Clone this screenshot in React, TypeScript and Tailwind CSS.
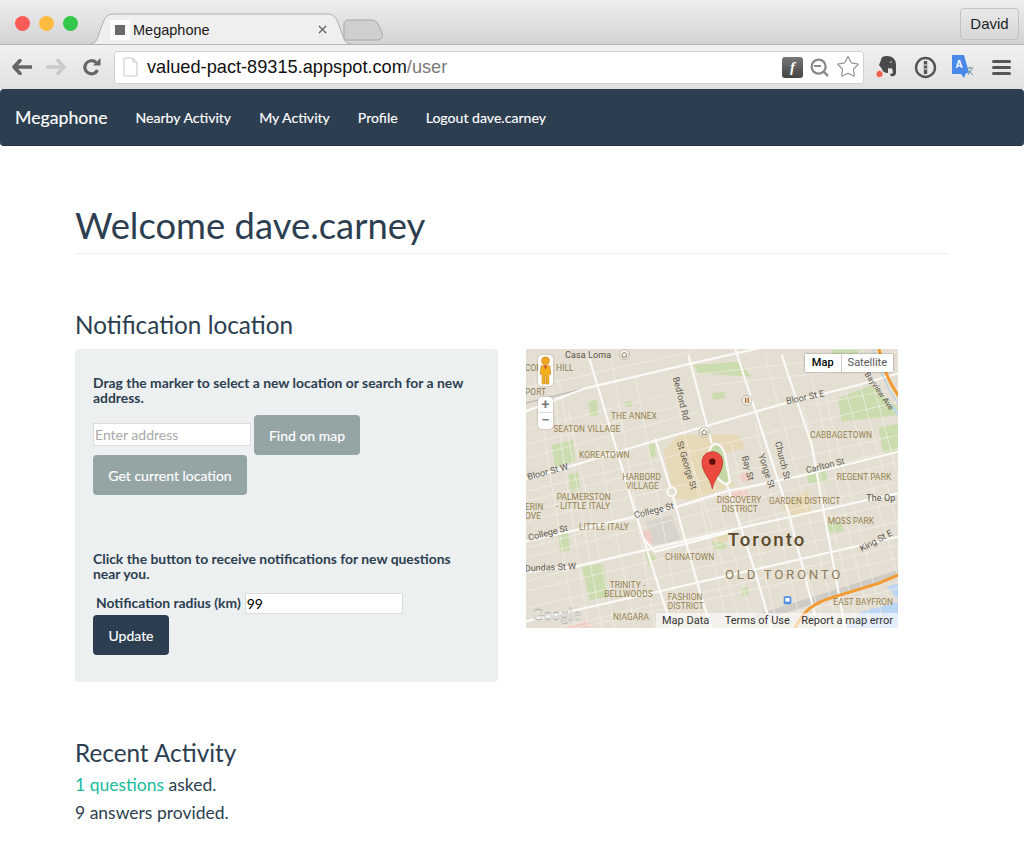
import { Search, Star, X } from 'lucide-react';

const minorRoads = [
  'M70 30 L190 849', 'M130 200 L270 849', 'M260 40 L390 849', 'M330 90 L470 849', 'M440 90 L610 849',
  'M560 400 L690 849', 'M690 230 L830 849', 'M720 30 L940 849', 'M830 170 L1000 849', 'M900 150 L1080 849',
  'M960 130 L1120 700', 'M1040 100 L1120 400', 'M0 255 L420 150', 'M0 340 L520 200', 'M0 470 L400 370',
  'M0 530 L1120 270', 'M0 640 L1120 350', 'M0 740 L1120 470', 'M0 790 L1120 530', 'M150 849 L1120 640',
  'M0 130 L500 20', 'M500 90 L1120 20', 'M860 180 L1120 130', 'M610 849 L1120 730',
  'M30 100 L150 849', 'M100 100 L230 849', 'M220 300 L330 849', 'M500 350 L650 849', 'M620 300 L760 849',
  'M780 500 L900 849', 'M860 100 L1040 849', 'M1000 100 L1120 550', 'M0 300 L470 180', 'M0 440 L1120 170',
  'M0 500 L350 420', 'M0 610 L1120 310', 'M0 710 L1120 410', 'M100 849 L1120 600', 'M560 120 L1120 60',
];

const mainRoads = [
  'M0 405 L380 290 L780 175 L1000 120 L1120 85',
  'M0 590 L440 490 L600 440 L840 390 L1120 320',
  'M0 682 L150 665 L640 550 L1120 445',
  'M0 830 L420 735 L1120 575',
  'M0 200 L180 130 L500 55 L700 10',
  'M190 30 L330 500 L440 849',
  'M390 280 L440 440 L530 760 L560 849',
  'M490 30 L560 295',
  'M600 400 L690 680 L740 849',
  'M630 10 L790 500 L880 849',
  'M770 30 L860 300 L960 849',
  'M355 580 L390 620 L620 560',
];

const parks = [
  'M80 300 L145 285 L150 350 L90 365 Z', 'M130 390 L160 380 L165 435 L135 440 Z', 'M190 170 L215 165 L220 210 L195 212 Z',
  'M505 60 L640 50 L680 95 L520 85 Z', 'M940 160 L1040 120 L1120 190 L1120 210 L950 230 Z', 'M1060 250 L1120 235 L1120 320 L1075 325 Z',
  'M170 665 L235 655 L250 755 L195 765 Z', 'M100 570 L130 565 L135 615 L105 620 Z', 'M360 610 L395 640 L370 665 Z',
  'M845 385 L900 370 L910 410 L850 415 Z', 'M560 590 L600 580 L605 610 L570 615 Z', 'M905 540 L950 530 L955 560 L910 565 Z',
  'M560 145 L600 140 L600 160 L565 165 Z', 'M300 170 L320 168 L320 185 L300 186 Z', 'M650 730 L670 725 L670 750 L652 752 Z',
  'M370 300 L390 295 L392 335 L375 335 Z', 'M920 15 L1000 15 L990 80 L930 70 Z',
];

const campus = [
  'M415 320 L460 270 L640 270 L660 310 L540 340 L630 420 L500 465 L450 460 Z',
  'M770 480 L850 435 L860 510 L790 515 Z', 'M560 570 L610 565 L610 590 L565 595 Z',
];

const labels: [number, number, string, string, number][] = [
  [120, 38, 'Casa Loma', '#5b5145', 27],
  [0, 78, 'COMBE HILL', '#8d7c5c', 25],
  [0, 150, 'PORT', '#8d7c5c', 25],
  [258, 222, 'THE ANNEX', '#94814f', 25],
  [85, 262, 'SEATON VILLAGE', '#94814f', 25],
  [162, 340, 'KOREATOWN', '#94814f', 25],
  [292, 405, 'HARBORD', '#94814f', 25],
  [302, 433, 'VILLAGE', '#94814f', 25],
  [95, 465, 'PALMERSTON', '#94814f', 25],
  [92, 493, '- LITTLE ITALY', '#94814f', 25],
  [162, 555, 'LITTLE ITALY', '#94814f', 25],
  [0, 495, 'ERIN', '#94814f', 25],
  [0, 523, 'OVE', '#94814f', 25],
  [420, 646, 'CHINATOWN', '#94814f', 25],
  [254, 728, 'TRINITY -', '#94814f', 25],
  [238, 756, 'BELLWOODS', '#94814f', 25],
  [428, 765, 'FASHION', '#94814f', 25],
  [428, 793, 'DISTRICT', '#94814f', 25],
  [264, 825, 'NIAGARA', '#94814f', 25],
  [575, 473, 'DISCOVERY', '#94814f', 25],
  [590, 501, 'DISTRICT', '#94814f', 25],
  [732, 476, 'GARDEN DISTRICT', '#94814f', 25],
  [855, 278, 'CABBAGETOWN', '#94814f', 25],
  [935, 404, 'REGENT PARK', '#94814f', 25],
  [908, 538, 'MOSS PARK', '#94814f', 25],
  [925, 780, 'EAST BAYFRON', '#94814f', 25],
  [1024, 467, 'The Op', '#57534a', 27],
];

const streets: [number, number, number, string, number][] = [
  [10, 405, -15, 'Bloor St W', 27],
  [785, 178, -12, 'Bloor St E', 27],
  [330, 520, -14, 'College St', 27],
  [12, 587, -14, 'College St', 27],
  [0, 680, -3, 'Dundas St W', 27],
  [845, 385, -14, 'Carlton St', 27],
  [1010, 620, -28, 'King St E', 27],
  [443, 98, 76, 'Bedford Rd', 27],
  [455, 292, 73, 'St George St', 27],
  [650, 335, 75, 'Bay St', 27],
  [700, 330, 72, 'Yonge St', 27],
  [750, 292, 76, 'Church St', 27],
  [1018, 88, 55, 'Bayview Ave', 24],
];

function MapPanel() {
  return (
    <div className="relative h-[279px] w-[372px] shrink-0 overflow-hidden font-['Roboto',sans-serif]">
      <svg viewBox="3 12 1116 837" className="block h-full w-full">
        <rect x="0" y="0" width="1125" height="855" fill="#e5dfd3" />
        {parks.map((d) => <path key={d} d={d} fill="#cbdcae" />)}
        {campus.map((d) => <path key={d} d={d} fill="#e6d9b8" />)}
        <path d="M360 530 L440 510 L470 590 L385 600 Z" fill="#d9d4cb" />
        <path d="M350 560 L375 555 L385 595 L360 600 Z" fill="#f0cdc6" />
        <path d="M610 440 L660 425 L670 450 L620 460 Z" fill="#f0cdc6" />
        <path d="M640 390 L670 380 L675 405 L650 410 Z" fill="#f0cdc6" />
        <path d="M110 849 L190 825 L200 849 Z" fill="#f0cdc6" />
        <path d="M690 810 L1120 675 L1120 695 L700 830 Z" fill="#cfccc6" />
        <path d="M960 849 L1010 800 L1120 770 L1120 849 Z" fill="#bcd5f3" />
        <path d="M1085 725 L1120 715 L1120 765 Z" fill="#bcd5f3" />
        <path d="M1085 165 L1120 200 L1120 215 Z" fill="#bcd5f3" />
        {minorRoads.map((d) => <path key={d} d={d} fill="none" stroke="#f3efe7" strokeOpacity="0.85" strokeWidth="2.5" />)}
        <path d="M0 175 L200 125 L500 55" fill="none" stroke="#bcb8b0" strokeWidth="4" />
        {mainRoads.map((d) => <path key={d} d={d} fill="none" stroke="#fbfaf7" strokeWidth="6.5" />)}
        <path d="M556 312 C565 285 590 295 600 330 L615 410 C600 430 580 400 570 390 M556 312 L535 360" fill="#c4d8a8" stroke="#fbfaf7" strokeWidth="7" />
        <circle cx="440" cy="440" r="13" fill="#e5dfd3" stroke="#fbfaf7" strokeWidth="6" />
        <path d="M810 849 C835 800 860 775 930 755 L1060 715 L1120 690" fill="none" stroke="#f39a30" strokeWidth="9" />
        <path d="M1062 12 C1075 70 1090 110 1122 155" fill="none" stroke="#f39a30" strokeWidth="9" />
        <path d="M1045 12 L1060 60 L1090 130 L1122 180" fill="none" stroke="#a9c9ed" strokeWidth="3" />
        {labels.map(([x, y, t, c, s]) => (
          <text key={t + x} x={x} y={y} fill={c} fontSize={s} letterSpacing="0.3">{t}</text>
        ))}
        {streets.map(([x, y, r, t, s]) => (
          <text key={t + x} x={x} y={y} transform={`rotate(${r} ${x} ${y})`} fill="#5f5a50" fontSize={s}>{t}</text>
        ))}
        <text x="608" y="604" fill="#5b4a2c" fontSize="56" fontWeight="500" letterSpacing="6">Toronto</text>
        <text x="600" y="702" fill="#8f7c5a" fontSize="40" letterSpacing="8">OLD TORONTO</text>
        <text x="20" y="825" fill="#fff" fillOpacity="0.75" stroke="#9a9a9a" strokeWidth="1" fontSize="50" fontFamily="'Liberation Serif', serif">Google</text>
        <circle cx="298" cy="28" r="15" fill="#f3efe8" stroke="#a9a08c" strokeWidth="2" />
        <path d="M289 30 L298 21 L307 30 M292 30 V36 H304 V30" fill="none" stroke="#8d7f64" strokeWidth="3" />
        <circle cx="538" cy="261" r="15" fill="#f3efe8" stroke="#a9a08c" strokeWidth="2" />
        <path d="M529 263 L538 254 L547 263 M532 263 V269 H544 V263" fill="none" stroke="#8d7f64" strokeWidth="3" />
        <circle cx="666" cy="166" r="15" fill="#f3efe8" stroke="#a9a08c" strokeWidth="2" />
        <rect x="660" y="158" width="4" height="16" fill="#a5672e" />
        <rect x="668" y="158" width="4" height="16" fill="#a5672e" />
        <rect x="776" y="754" width="23" height="24" rx="4" fill="#4d90e0" />
        <rect x="781" y="759" width="13" height="11" fill="#fff" />
        <path d="M562 432 C555 395 531 385 531 352 C531 332 545 320 562 320 C579 320 593 332 593 352 C593 385 569 395 562 432 Z" fill="#ea4a3f" stroke="#b52e28" strokeWidth="2" />
        <circle cx="562" cy="350" r="9.5" fill="#5e0f0a" />
      </svg>

      {/* pegman */}
      <div className="absolute left-[12px] top-[6px] flex h-[31px] w-[15px] items-start justify-center rounded-sm bg-white shadow-[0_0_2px_rgba(0,0,0,0.3)]">
        <svg viewBox="0 0 13 30" className="mt-[1px] h-[29px] w-[13px]">
          <circle cx="6.5" cy="5" r="4" fill="#f2a51f" stroke="#c57f12" strokeWidth="0.7" />
          <path d="M2 10 H11 L12 19 H10 V29 H7 V20 H6 V29 H3 V19 H1 Z" fill="#f2b01e" stroke="#c57f12" strokeWidth="0.6" />
          <path d="M5 10 H8 L6.5 14 Z" fill="#c0392b" />
        </svg>
      </div>

      {/* zoom */}
      <div className="absolute left-[12px] top-[48px] flex w-[15px] flex-col rounded-sm bg-white text-center text-[#777] shadow-[0_0_2px_rgba(0,0,0,0.3)]">
        <span className="h-[16px] border-b border-[#ddd] text-[15px] font-medium leading-[15px]">+</span>
        <span className="h-[16px] text-[15px] font-medium leading-[15px]">−</span>
      </div>

      {/* map type */}
      <div className="absolute right-[5px] top-[5px] flex h-[18px] items-center bg-white text-[11px] shadow-[0_0_2px_rgba(0,0,0,0.4)]">
        <span className="flex h-full items-center border-r border-[#ccc] px-[7px] font-medium text-black">Map</span>
        <span className="flex h-full items-center px-[6px] text-[#565656]">Satellite</span>
      </div>

      {/* attribution */}
      <div className="absolute bottom-0 right-0 flex h-[15px] w-[242px] items-center justify-between bg-white/60 pl-[6px] pr-[5px] text-[11px] leading-none text-[#333]">
        <span>Map Data</span>
        <span className="ml-[4px]">Terms of Use</span>
        <span>Report a map error</span>
      </div>
    </div>
  );
}

function BrowserChrome() {
  return (
    <div className="font-['Liberation_Sans',sans-serif]">
      <div className="relative flex h-[45px] items-start border-b border-[#b5b5b5] bg-gradient-to-b from-[#eeeeee] to-[#d3d3d3]">
        <div className="flex gap-[9px] pl-[15px] pt-[16px]">
          <span className="size-[15px] rounded-full bg-[#fc5b57]" />
          <span className="size-[15px] rounded-full bg-[#fdbb40]" />
          <span className="size-[15px] rounded-full bg-[#34c84a]" />
        </div>
        <svg className="absolute left-[90px] top-[13px]" width="300" height="33" viewBox="0 0 300 33">
          <path d="M254 27 L288 27 Q294 26 292 20 L288 11 Q286 7 282 7 L258 7 Q253 8 254 13 Z" fill="#cfcfcf" stroke="#a8a8a8" />
          <path d="M0 31 Q5 31 7 26 L14 7 Q17 1 23 1 L238 1 Q244 1 247 7 L254 26 Q256 31 261 31" fill="#efefef" stroke="#b0b0b0" />
        </svg>
        <div className="absolute left-[110px] top-[20px] flex size-[20px] items-center justify-center bg-white">
          <span className="size-[10px] bg-[#6a6a6a]" />
        </div>
        <span className="absolute left-[133px] top-[21px] text-[14.5px] leading-[18px] text-[#1a1a1a]">Megaphone</span>
        <X className="absolute left-[316px] top-[23px] size-[13px] text-[#666]" strokeWidth={2.5} />
        <div className="absolute right-[5px] top-[8px] flex h-[32px] w-[59px] items-center justify-center rounded-[4px] border border-[#c2c2c2] text-[15px] text-[#1f1f1f]">David</div>
      </div>
      <div className="flex h-[44px] items-center bg-gradient-to-b from-[#f1f1f1] to-[#e1e1e1]">
        <div className="flex w-[114px] items-center">
          <svg className="ml-[12px]" width="20" height="16" viewBox="0 0 20 16">
            <path d="M8 1.5 L2 8 L8 14.5 M3 8 H19" fill="none" stroke="#666" strokeWidth="3.6" strokeLinecap="round" strokeLinejoin="round" />
          </svg>
          <svg className="ml-[14px]" width="20" height="16" viewBox="0 0 20 16">
            <path d="M12 1.5 L18 8 L12 14.5 M17 8 H1" fill="none" stroke="#cacaca" strokeWidth="3.6" strokeLinecap="round" strokeLinejoin="round" />
          </svg>
          <svg className="ml-[17px]" width="18" height="18" viewBox="0 0 18 18">
            <path d="M14.5 12 A6.6 6.6 0 1 1 13 4.5" fill="none" stroke="#666" strokeWidth="3.2" />
            <path d="M10 7.5 H17.5 V0 Z" fill="#666" />
          </svg>
        </div>
        <div className="flex h-[33px] w-[750px] items-center rounded-[3px] border border-[#d0d0d0] bg-white">
          <svg className="ml-[8px] shrink-0" width="15" height="20" viewBox="0 0 15 20">
            <path d="M1 1 H10 L14 5 V19 H1 Z" fill="#fdfdfd" stroke="#c9c9c9" />
            <path d="M10 1 V5 H14" fill="#eee" stroke="#c9c9c9" />
          </svg>
          <span className="ml-[9px] text-[18.2px] leading-none text-[#111]">valued-pact-89315.appspot.com<span className="text-[#7a7a7a]">/user</span></span>
          <div className="ml-auto flex items-center gap-[6px] pr-[3px]">
            <span className="flex size-[21px] items-center justify-center rounded-[3px] bg-gradient-to-b from-[#777] to-[#444] font-['Liberation_Serif',serif] text-[15px] font-bold italic text-white">f</span>
            <span className="relative">
              <Search className="size-[21px] text-[#8a8a8a]" strokeWidth={2.6} />
              <span className="absolute left-[5px] top-[8px] h-[2px] w-[7px] bg-[#8a8a8a]" />
            </span>
            <Star className="size-[24px] text-[#9a9a9a]" strokeWidth={1.3} />
          </div>
        </div>
        <div className="flex flex-1 items-center pl-[11px]">
          <svg width="22" height="24" viewBox="0 0 22 24">
            <path d="M6 5 Q6 1 12 1 Q20 1 21 9 L21 18 Q20 22 16 21 L15 19 L18 18 L17 13 Q15 14 13 13 L13 18 Q8 18 7 14 L4 10 Z" fill="#4a4a4a" />
            <path d="M15 7 H17" stroke="#ddd" strokeWidth="1.2" />
            <circle cx="4.5" cy="19" r="3.7" fill="#f2604f" stroke="#eee" strokeWidth="1" />
          </svg>
          <svg className="ml-[17px]" width="23" height="23" viewBox="0 0 23 23">
            <circle cx="11.5" cy="11.5" r="9.5" fill="none" stroke="#555" strokeWidth="2.4" />
            <path d="M11.5 5 V18" stroke="#555" strokeWidth="3.4" />
            <path d="M10 9 H13 M10 13 H13" stroke="#eee" strokeWidth="1" />
          </svg>
          <svg className="ml-[14px]" width="24" height="24" viewBox="0 0 24 24">
            <path d="M15 10 H23 V22 H15 Z" fill="#e4e4e4" />
            <path d="M1 0 H13 L18 18 H15 L13 23 L10 19 H1 Z" fill="#4a88ea" />
            <text x="4.5" y="13" fill="#fff" fontSize="10" fontWeight="700" fontFamily="'Liberation Sans', sans-serif">A</text>
            <path d="M16 13 H22 M19 12 V14 M17 20 L21 14 M17 15 L22 20" stroke="#6d9b96" strokeWidth="1" fill="none" />
          </svg>
          <div className="ml-[17px] flex w-[19px] flex-col gap-[3px]">
            <span className="h-[3px] rounded-full bg-[#555]" />
            <span className="h-[3px] rounded-full bg-[#555]" />
            <span className="h-[3px] rounded-full bg-[#555]" />
          </div>
        </div>
      </div>
    </div>
  );
}

export default function App() {
  return (
    <div className="min-h-[857px] bg-white font-['Lato',sans-serif] text-[#2c3e50] antialiased">
      <BrowserChrome />

      <nav className="flex h-[57px] items-center rounded-[4px] border-b border-[#243342] bg-[#2c3e50] pl-[15px] pt-[2px] text-white [-webkit-text-stroke:0.15px_white]">
        <a className="mr-[28px] text-[17.7px]">Megaphone</a>
        <div className="flex gap-[28px] text-[14.1px]">
          <a>Nearby Activity</a>
          <a>My Activity</a>
          <a>Profile</a>
          <a>Logout dave.carney</a>
        </div>
      </nav>

      <main className="px-[75px]">
        <div className="mt-[54px] h-[54px] border-b border-[#ecf0f1]">
          <h1 className="text-[36.4px] leading-[50px]">Welcome dave.carney</h1>
        </div>

        <h2 className="mt-[56px] text-[24.3px] leading-[30px]">Notification location</h2>

        <div className="mt-[9px] flex gap-[28px]">
          <div className="h-[333px] w-[423px] rounded-[4px] bg-[#ecf0f1] px-[18px] pt-[26px]">
            <p className="text-[13.9px] font-bold leading-[15px]">Drag the marker to select a new location or search for a new address.</p>
            <div className="mt-[10px] flex items-start gap-[3px]">
              <input placeholder="Enter address" className="mt-[8px] h-[23px] w-[158px] border border-[#dcdcdc] bg-white px-[1px] text-[14px] outline-none placeholder:text-[#a9a9a9]" />
              <button className="h-[40px] w-[106px] rounded-[4px] bg-[#95a5a6] text-[14px] text-white [-webkit-text-stroke:0.15px_white]">Find on map</button>
            </div>
            <button className="block h-[40px] w-[154px] rounded-[4px] bg-[#95a5a6] text-[14px] text-white [-webkit-text-stroke:0.15px_white]">Get current location</button>

            <p className="mt-[56px] text-[13.9px] font-bold leading-[15px]">Click the button to receive notifications for new questions near you.</p>
            <div className="mt-[12px] flex h-[21px] items-center">
              <label className="ml-[3px] text-[13.9px] font-bold">Notification radius (km)</label>
              <input defaultValue="99" className="ml-[4px] h-[21px] w-[158px] border border-[#dcdcdc] bg-white px-[1px] text-[14px] text-black outline-none" />
            </div>
            <button className="mt-[1px] block h-[40px] w-[76px] rounded-[4px] bg-[#2c3e50] text-[14px] text-white [-webkit-text-stroke:0.15px_white]">Update</button>
          </div>
          <MapPanel />
        </div>

        <h2 className="mt-[56px] text-[24.3px] leading-[30px]">Recent Activity</h2>
        <p className="mt-[3px] text-[17.5px] leading-[28px]"><a className="text-[#18bc9c]">1 questions</a> asked.</p>
        <p className="text-[17.5px] leading-[28px]">9 answers provided.</p>
      </main>
    </div>
  );
}
